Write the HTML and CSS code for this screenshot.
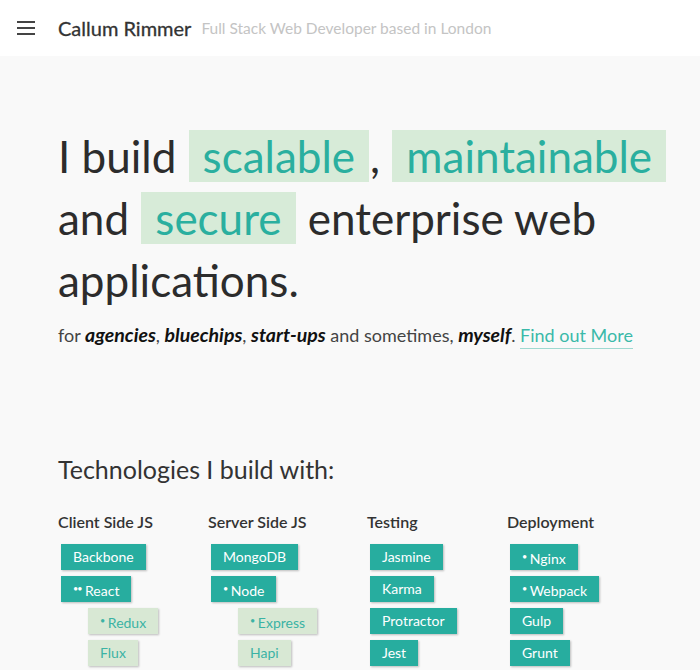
FILE: index.html
```html
<!DOCTYPE html>
<html lang="en">
<head>
<meta charset="utf-8">
<title>Callum Rimmer</title>
<link rel="stylesheet" href="styles.css">
</head>
<body>
<header class="topbar">
  <button class="menu" aria-label="Menu">
    <svg width="18" height="14" viewBox="0 0 18 14"><rect x="0" y="0" width="18" height="2" fill="#444"/><rect x="0" y="6" width="18" height="2" fill="#444"/><rect x="0" y="12" width="18" height="2" fill="#444"/></svg>
  </button>
  <span class="brand">Callum Rimmer</span>
  <span class="tagline">Full Stack Web Developer based in London</span>
</header>
<main class="content">
  <h1 class="hero"><span>I build</span> <mark class="hl">scalable</mark><span>,</span> <mark class="hl">maintainable</mark> <span>and</span> <mark class="hl">secure</mark> <span>enterprise web</span> <span>applications.</span></h1>
  <p class="sub">for <b>agencies</b>, <b>bluechips</b>, <b>start-ups</b> and sometimes, <b>myself</b>. <a href="#" class="more">Find out More</a></p>

  <h2 class="tech-title">Technologies I build with:</h2>
  <div class="cols">
    <section class="col">
      <h3>Client Side JS</h3>
      <ul class="tags">
        <li><span class="tag">Backbone</span></li>
        <li><span class="tag"><i class="dots">••</i> React</span></li>
        <li class="nested"><span class="tag light"><i class="dots">•</i> Redux</span></li>
        <li class="nested"><span class="tag light">Flux</span></li>
      </ul>
    </section>
    <section class="col">
      <h3>Server Side JS</h3>
      <ul class="tags">
        <li><span class="tag">MongoDB</span></li>
        <li><span class="tag"><i class="dots">•</i> Node</span></li>
        <li class="nested"><span class="tag light"><i class="dots">•</i> Express</span></li>
        <li class="nested"><span class="tag light">Hapi</span></li>
      </ul>
    </section>
    <section class="col">
      <h3>Testing</h3>
      <ul class="tags">
        <li><span class="tag">Jasmine</span></li>
        <li><span class="tag">Karma</span></li>
        <li><span class="tag">Protractor</span></li>
        <li><span class="tag">Jest</span></li>
      </ul>
    </section>
    <section class="col">
      <h3>Deployment</h3>
      <ul class="tags">
        <li><span class="tag"><i class="dots">•</i> Nginx</span></li>
        <li><span class="tag"><i class="dots">•</i> Webpack</span></li>
        <li><span class="tag">Gulp</span></li>
        <li><span class="tag">Grunt</span></li>
      </ul>
    </section>
  </div>
</main>
</body>
</html>
```
FILE: styles.css
```css
* { box-sizing: border-box; }
html, body { margin: 0; padding: 0; }
body {
  background: #f9f9f9;
  font-family: "Lato", "Noto Sans", sans-serif;
  color: #333;
  width: 700px;
  height: 670px;
  overflow: hidden;
}
.topbar {
  height: 56px;
  background: #fff;
  display: flex;
  align-items: center;
  padding-left: 17px;
}
.menu {
  border: 0;
  background: none;
  padding: 0;
  width: 18px;
  height: 14px;
  display: flex;
  margin-right: 23px;
}
.brand {
  font-size: 20px;
  color: #333;
  font-weight: 400;
  -webkit-text-stroke: 0.3px #333;
  margin-right: 10px;
}
.tagline {
  font-size: 15.5px;
  color: #c4c4c4;
}
.content {
  padding: 0 0 0 58px;
}
.hero {
  margin: 69px 0 0;
  font-size: 44px;
  font-weight: 400;
  line-height: 62px;
  color: #2c2c2c;
}
.hl {
  display: inline-block;
  line-height: 52px;
  background: #d7ebd8;
  color: #2aaf9f;
  padding: 0 14px;
  margin: 0 1px;
}
.sub {
  margin: 12px 0 0;
  font-size: 18px;
  color: #444;
}
.sub b {
  font-style: italic;
  font-weight: 700;
  color: #111;
  font-size: 19.5px;
}
.more {
  color: #3bb9a9;
  text-decoration: none;
  border-bottom: 1px solid #9fd9d1;
  padding-bottom: 2px;
}
.tech-title {
  margin: 108px 0 0;
  font-size: 25px;
  font-weight: 400;
  color: #333;
}
.cols {
  display: grid;
  grid-template-columns: 150px 159px 140px 120px;
  margin-top: 28px;
}
.col h3 {
  margin: 0 0 13px;
  font-size: 16px;
  font-weight: 600;
  color: #333;
}
.tags {
  list-style: none;
  margin: 0;
  padding: 0 0 0 3px;
  display: flex;
  flex-direction: column;
  gap: 6px;
}
.tags li { display: flex; }
.tags li.nested { padding-left: 27px; }
.tag {
  display: inline-block;
  height: 26px;
  line-height: 26px;
  padding: 0 12px;
  background: #27ad9f;
  color: #fff;
  font-size: 14px;
  box-shadow: 1px 1px 2px rgba(0,0,0,0.25);
}
.tag.light {
  background: #d8e8d4;
  color: #3bb3a4;
}
.dots {
  font-style: normal;
  font-size: 9px;
  vertical-align: 4px;
  letter-spacing: -1px;
}
```
